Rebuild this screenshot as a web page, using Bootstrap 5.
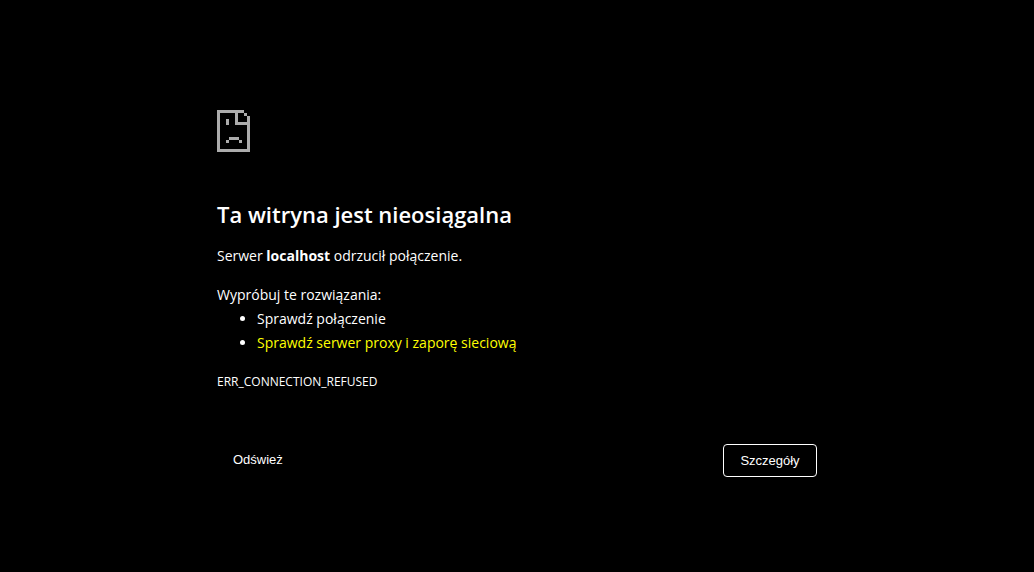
<!DOCTYPE html>
<html lang="pl">
<head>
<meta charset="utf-8">
<meta name="viewport" content="width=device-width, initial-scale=1">
<title>localhost</title>
<link href="https://cdn.jsdelivr.net/npm/bootstrap@5.3.0/dist/css/bootstrap.min.css" rel="stylesheet">
<style>
body{background:#000;color:#fff;font-family:"Open Sans","Noto Sans",sans-serif;font-size:14px;line-height:24px}
.error-page{max-width:600px;padding-top:110px}
.error-icon{width:33px;height:42px;margin-bottom:47px}
h1{font-size:22px;line-height:30px;font-weight:600;margin-bottom:15px}
.error-page p{margin-bottom:15px}
.error-page ul{padding-left:40px;margin-bottom:15px}
.error-page a{color:#ff0;text-decoration:none}
.error-code{font-size:12px}
.actions{margin-top:50px}
.actions .btn{font:13px/15px "Liberation Sans",Arial,sans-serif;padding:8px 16px;border-radius:4px;color:#fff}
.actions .btn-details{min-width:94px}
</style>
</head>
<body>
<main class="error-page container-fluid px-0 mx-auto">
<svg class="error-icon d-block" viewBox="0 0 33 42" fill="#acacac" shape-rendering="crispEdges" aria-hidden="true">
<path d="M0 0H27V3H21V12H33V42H0ZM3 3V39H30V15H18V3ZM27 3H30V6H27ZM30 6H33V12H30ZM9 9H12V15H9ZM12 27H22V30H12ZM9 30H12V33H9ZM22 30H25V33H22Z"/>
</svg>
<h1>Ta witryna jest nieosiągalna</h1>
<p>Serwer <strong>localhost</strong> odrzucił połączenie.</p>
<p class="mb-0">Wypróbuj te rozwiązania:</p>
<ul><li>Sprawdź połączenie</li><li><a href="#">Sprawdź serwer proxy i zaporę sieciową</a></li></ul>
<div class="error-code">ERR_CONNECTION_REFUSED</div>
<div class="actions d-flex justify-content-between align-items-start">
<button type="button" class="btn border-0">Odśwież</button>
<button type="button" class="btn btn-details border border-white">Szczegóły</button>
</div>
</main>
<script src="https://cdn.jsdelivr.net/npm/bootstrap@5.3.0/dist/js/bootstrap.bundle.min.js"></script>
</body>
</html>
